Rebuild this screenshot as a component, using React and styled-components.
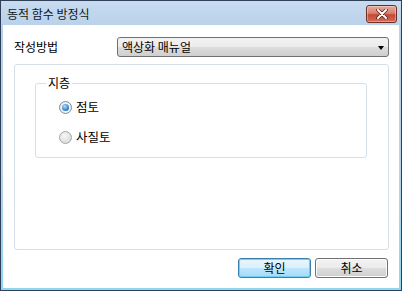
import React, { useState } from "react";
import styled, { createGlobalStyle } from "styled-components";

const GlobalStyle = createGlobalStyle`
    html, body {
        margin: 0;
        padding: 0;
        background: #ffffff;
    }
    body {
        font-family: "Noto Sans CJK KR", "Noto Sans", sans-serif;
        font-size: 12px;
        color: #000000;
    }
`;

const Window = styled.div`
    width: 402px;
    height: 291px;
    box-sizing: border-box;
    border: 1px solid #2f3f58;
    background: linear-gradient(to bottom, #c8dcf0 0, #b9d1ea 24px, #b4d3ec 60%, #8fd6f0 100%);
    display: flex;
    flex-direction: column;
`;

const TitleBar = styled.div`
    height: 24px;
    display: flex;
    align-items: center;
    justify-content: space-between;
    padding: 0 4px 0 6px;
`;

const Title = styled.span`
    font-size: 12px;
    line-height: 14px;
    color: #101820;
    margin-top: 1px;
`;

const CloseButton = styled.button`
    width: 31px;
    height: 18px;
    margin-top: 2px;
    padding: 0;
    box-sizing: border-box;
    border: 1px solid #6e2d25;
    border-radius: 3px;
    background: linear-gradient(to bottom, #e9a99c 0%, #d9806f 45%, #c44a36 55%, #d26b56 100%);
    box-shadow: inset 0 0 0 1px rgba(255, 255, 255, 0.35);
    display: flex;
    align-items: center;
    justify-content: center;
`;

const Content = styled.div`
    flex: 1;
    margin: 0 2px 2px 2px;
    background: #ffffff;
    padding: 12px 10px 10px 11px;
    display: flex;
    flex-direction: column;
`;

const FormRow = styled.div`
    height: 20px;
    display: flex;
    align-items: center;
`;

const Label = styled.span`
    width: 103px;
    line-height: 14px;
`;

const Select = styled.div`
    flex: 1;
    height: 20px;
    box-sizing: border-box;
    border: 1px solid #707070;
    border-radius: 3px;
    background: linear-gradient(to bottom, #f3f3f3 0%, #ebebeb 50%, #dddddd 51%, #cfcfcf 100%);
    display: flex;
    align-items: center;
    justify-content: space-between;
    padding: 0 4px 0 4px;
`;

const SelectText = styled.span`
    line-height: 14px;
`;

const Arrow = styled.span`
    width: 0;
    height: 0;
    border-left: 3.5px solid transparent;
    border-right: 3.5px solid transparent;
    border-top: 4px solid #000000;
    margin-top: 1px;
`;

const Panel = styled.div`
    height: 186px;
    margin-top: 7px;
    box-sizing: border-box;
    border: 1px solid #d5dfe5;
    border-radius: 3px;
    padding: 11px 21px 0 20px;
`;

const Group = styled.fieldset`
    margin: 0;
    padding: 0;
    border: 1px solid #d5dfe5;
    border-radius: 3px;
    min-width: 0;
`;

const Legend = styled.legend`
    margin-left: 10px;
    padding: 0 2px;
    font-size: 12px;
    line-height: 14px;
`;

const RadioList = styled.div`
    display: flex;
    flex-direction: column;
    gap: 14px;
    padding: 9px 0 12px 23px;
`;

const RadioRow = styled.label`
    height: 16px;
    display: flex;
    align-items: center;
    gap: 4px;
    cursor: pointer;
    line-height: 14px;
    font-size: 12.5px;
`;

const RadioCircle = styled.span`
    width: 13px;
    height: 13px;
    box-sizing: border-box;
    border-radius: 50%;
    border: 1px solid ${(p) => (p.$checked ? "#7d8b99" : "#a2a6ab")};
    background: ${(p) =>
        p.$checked
            ? "radial-gradient(circle at 50% 50%, #ffffff 0, #e6e6e6 100%)"
            : "radial-gradient(circle at 40% 35%, #f6f6f6 0, #d4d4d4 100%)"};
    display: flex;
    align-items: center;
    justify-content: center;

    &::after {
        content: "";
        display: ${(p) => (p.$checked ? "block" : "none")};
        width: 7px;
        height: 7px;
        border-radius: 50%;
        background: radial-gradient(circle at 40% 35%, #b6e0fb 0, #3b8ed4 55%, #14508f 100%);
    }
`;

const ButtonRow = styled.div`
    margin-top: 8px;
    margin-right: 1px;
    display: flex;
    justify-content: flex-end;
    gap: 4px;
`;

const Button = styled.button`
    width: 73px;
    height: 20px;
    box-sizing: border-box;
    padding: 0;
    border-radius: 3px;
    font-family: inherit;
    font-size: 12px;
    line-height: 14px;
    color: #000000;
    border: 1px solid ${(p) => (p.$primary ? "#3c7fb1" : "#707070")};
    background: ${(p) =>
        p.$primary
            ? "linear-gradient(to bottom, #eaf6fd 0%, #d9f0fc 50%, #bee6fd 51%, #a7d9f5 100%)"
            : "linear-gradient(to bottom, #f2f2f2 0%, #ebebeb 50%, #dddddd 51%, #cfcfcf 100%)"};
    box-shadow: inset 0 0 0 1px ${(p) => (p.$primary ? "#6fd0f6" : "#fcfcfc")};
`;

const soils = ["점토", "사질토"];

export default function App() {
    const [soil, setSoil] = useState("점토");

    return (
        <>
            <GlobalStyle />
            <Window>
                <TitleBar>
                    <Title>동적 함수 방정식</Title>
                    <CloseButton aria-label="닫기">
                        <svg width="12" height="10" viewBox="0 0 12 10">
                            <path
                                d="M2 1 L10 9 M10 1 L2 9"
                                stroke="#4a1a14"
                                strokeWidth="3.4"
                                strokeLinecap="round"
                            />
                            <path
                                d="M2 1 L10 9 M10 1 L2 9"
                                stroke="#ffffff"
                                strokeWidth="2"
                                strokeLinecap="round"
                            />
                        </svg>
                    </CloseButton>
                </TitleBar>
                <Content>
                    <FormRow>
                        <Label>작성방법</Label>
                        <Select>
                            <SelectText>액상화 매뉴얼</SelectText>
                            <Arrow />
                        </Select>
                    </FormRow>
                    <Panel>
                        <Group>
                            <Legend>지층</Legend>
                            <RadioList>
                                {soils.map((s) => (
                                    <RadioRow key={s} onClick={() => setSoil(s)}>
                                        <RadioCircle $checked={soil === s} />
                                        {s}
                                    </RadioRow>
                                ))}
                            </RadioList>
                        </Group>
                    </Panel>
                    <ButtonRow>
                        <Button $primary>확인</Button>
                        <Button>취소</Button>
                    </ButtonRow>
                </Content>
            </Window>
        </>
    );
}
